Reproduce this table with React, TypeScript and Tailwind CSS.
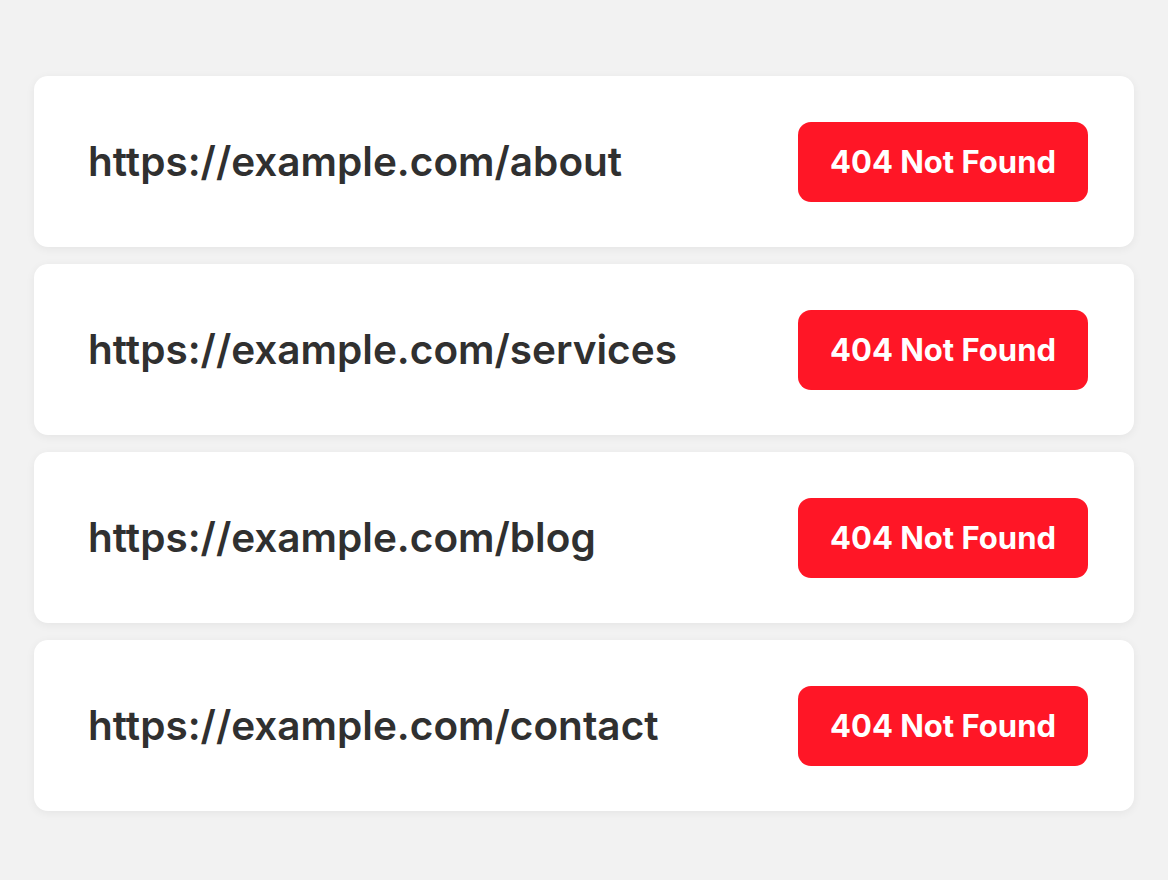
import React from 'react';

const urls = [
  'https://example.com/about',
  'https://example.com/services',
  'https://example.com/blog',
  'https://example.com/contact',
];

export default function App() {
  return (
    <div className="min-h-[880px] bg-[#f2f2f2] px-[34px] pt-[76px] pb-[69px] font-['Inter','Noto_Sans',sans-serif]">
      <div className="flex flex-col gap-[17px]">
        {urls.map((url) => (
          <div
            key={url}
            className="flex h-[171px] items-center justify-between rounded-[14px] bg-white pl-[54px] pr-[46px] shadow-[0_2px_10px_rgba(0,0,0,0.06)]"
          >
            <span className="pt-[2px] text-[40.5px] font-semibold text-[#303030]">{url}</span>
            <span className="flex h-[80px] w-[290px] items-center justify-center rounded-[13px] bg-[#ff1626] pt-[2px] text-[31px] font-bold text-white">
              404 Not Found
            </span>
          </div>
        ))}
      </div>
    </div>
  );
}
